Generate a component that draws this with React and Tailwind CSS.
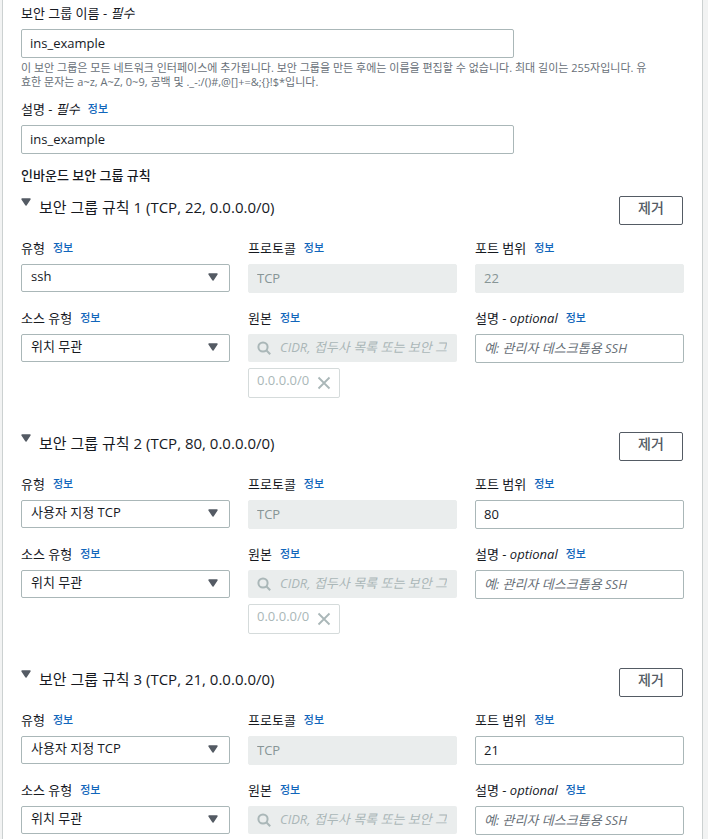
import React, { useId, useState } from 'react';

const TYPE_OPTIONS = ['ssh', '사용자 지정 TCP', 'HTTP', 'HTTPS'];
const SOURCE_OPTIONS = ['위치 무관', '내 IP', '사용자 지정'];

const NAME_HINT =
  '이 보안 그룹은 모든 네트워크 인터페이스에 추가됩니다. 보안 그룹을 만든 후에는 이름을 편집할 수 없습니다. 최대 길이는 255자입니다. 유효한 문자는 a~z, A~Z, 0~9, 공백 및 ._-:/()#,@[]+=&;{}!$*입니다.';

const INITIAL_RULES = [
  { id: 1, type: 'ssh', port: '22', portLocked: true, source: '위치 무관' },
  { id: 2, type: '사용자 지정 TCP', port: '80', portLocked: false, source: '위치 무관' },
  { id: 3, type: '사용자 지정 TCP', port: '21', portLocked: false, source: '위치 무관' },
];

const inputClass =
  'block w-full h-[29px] rounded-xs border border-[#aab7b8] bg-white px-2 pb-[2px] text-[13px] text-[#16191f] outline-none placeholder:italic placeholder:text-[#687078] focus:border-[#00a1c9] disabled:border-[#eaeded] disabled:bg-[#eaeded] disabled:text-[#879596] disabled:placeholder:text-[#aab7b8]';

function CaretIcon({ className }) {
  return (
    <svg className={className} width="10" height="8" viewBox="0 0 10 8" aria-hidden="true">
      <path d="M1 1h8L5 7z" fill="#545b64" stroke="#545b64" strokeWidth="1.4" strokeLinejoin="round" />
    </svg>
  );
}

function SearchIcon({ className }) {
  return (
    <svg className={className} width="14" height="14" viewBox="0 0 14 14" fill="none" stroke="#aab7b8" strokeWidth="2" aria-hidden="true">
      <circle cx="6" cy="6" r="4.6" />
      <path d="M9.3 9.3L13.2 13.2" />
    </svg>
  );
}

function CloseIcon() {
  return (
    <svg width="14" height="14" viewBox="0 0 14 14" fill="none" stroke="#aab7b8" strokeWidth="1.8" aria-hidden="true">
      <path d="M1.5 1.5l11 11M12.5 1.5l-11 11" />
    </svg>
  );
}

function Field({ id, label, suffix, info = true, children }) {
  return (
    <div className="min-w-0">
      <div className="mb-[7px] flex h-[18px] items-center gap-2 leading-[18px]">
        <label htmlFor={id} className="whitespace-nowrap">
          {label}
          {suffix && <> - <i>{suffix}</i></>}
        </label>
        {info && (
          <a href="#info" className="text-[11px] font-medium whitespace-nowrap text-[#1166bb] hover:underline">
            정보
          </a>
        )}
      </div>
      {children}
    </div>
  );
}

function Select({ id, value, options, onChange }) {
  return (
    <div className="relative">
      <select
        id={id}
        value={value}
        onChange={(e) => onChange(e.target.value)}
        className="block h-7 w-full appearance-none rounded-xs border border-[#aab7b8] bg-white pr-8 pb-[2px] pl-[9px] text-[13px] text-[#16191f] outline-none focus:border-[#00a1c9]"
      >
        {options.map((option) => (
          <option key={option}>{option}</option>
        ))}
      </select>
      <CaretIcon className="pointer-events-none absolute top-[9px] right-3" />
    </div>
  );
}

function Rule({ rule, number, onChange, onRemove }) {
  const id = useId();
  const [open, setOpen] = useState(true);

  return (
    <section>
      <div className="flex items-start justify-between pr-px">
        <button
          type="button"
          onClick={() => setOpen(!open)}
          aria-expanded={open}
          className="flex items-start gap-2 text-left text-[15px] leading-[22px]"
        >
          <CaretIcon className="mt-[2px]" />
          <span>
            보안 그룹 규칙 {number} (TCP, {rule.port}, 0.0.0.0/0)
          </span>
        </button>
        <button
          type="button"
          onClick={onRemove}
          className="h-[29px] w-16 rounded-xs border border-[#545b64] pb-[6px] text-sm font-medium text-[#545b64] hover:bg-[#fafafa]"
        >
          제거
        </button>
      </div>

      {open && (
        <div className="mt-[14px] grid grid-cols-3 gap-x-[18px] gap-y-4">
          <Field id={`${id}-type`} label="유형">
            <Select
              id={`${id}-type`}
              value={rule.type}
              options={TYPE_OPTIONS}
              onChange={(type) => onChange({ type })}
            />
          </Field>
          <Field id={`${id}-protocol`} label="프로토콜">
            <input id={`${id}-protocol`} className={inputClass} value="TCP" disabled readOnly />
          </Field>
          <Field id={`${id}-port`} label="포트 범위">
            <input
              id={`${id}-port`}
              className={inputClass}
              value={rule.port}
              disabled={rule.portLocked}
              onChange={(e) => onChange({ port: e.target.value })}
            />
          </Field>

          <Field id={`${id}-source`} label="소스 유형">
            <Select
              id={`${id}-source`}
              value={rule.source}
              options={SOURCE_OPTIONS}
              onChange={(source) => onChange({ source })}
            />
          </Field>
          <Field id={`${id}-cidr`} label="원본">
            <div className="relative">
              <input
                id={`${id}-cidr`}
                placeholder="CIDR, 접두사 목록 또는 보안 그룹 추가"
                disabled
                className="block h-7 w-full rounded-xs bg-[#eaeded] pr-[10px] pb-[2px] pl-8 text-[13px] placeholder:text-[#aab7b8] placeholder:italic"
              />
              <SearchIcon className="pointer-events-none absolute top-[7px] left-[9px]" />
            </div>
            <div className="mt-[6px] inline-flex h-[30px] items-center gap-2 rounded-xs border border-[#d5dbdb] px-2 text-[13px] text-[#aab7b8]">
              <span className="pb-1">0.0.0.0/0</span>
              <button type="button" aria-label="0.0.0.0/0 제거" disabled>
                <CloseIcon />
              </button>
            </div>
          </Field>
          <Field id={`${id}-desc`} label="설명" suffix="optional">
            <input id={`${id}-desc`} className={inputClass} placeholder="예: 관리자 데스크톱용 SSH" />
          </Field>
        </div>
      )}
    </section>
  );
}

export default function App() {
  const [name, setName] = useState('ins_example');
  const [description, setDescription] = useState('ins_example');
  const [rules, setRules] = useState(INITIAL_RULES);

  const updateRule = (id, patch) => {
    setRules(rules.map((rule) => (rule.id === id ? { ...rule, ...patch } : rule)));
  };

  return (
    <div className="h-screen overflow-y-auto bg-[#f2f3f3] pr-[5px] pl-[2px] font-['Open_Sans','Noto_Sans_CJK_KR',sans-serif] text-[13px] text-[#16191f] [scrollbar-width:none]">
      <main className="min-h-full border-x border-[#ccd1d1] bg-white px-[18px] pt-1 pb-6">
        <div className="grid grid-cols-12 gap-x-[18px]">
          <div className="col-span-9">
            <Field
              id="group-name"
              label={<>보안 그룹 이름 - <i>필수</i></>}
              info={false}
            >
              <input id="group-name" className={inputClass} value={name} onChange={(e) => setName(e.target.value)} />
            </Field>
          </div>
          <p className="col-span-12 mt-[3px] pr-8 text-[11px] leading-[14px] text-[#687078]">{NAME_HINT}</p>
          <div className="col-span-9 mt-[11px]">
            <Field id="group-desc" label={<>설명 - <i>필수</i></>}>
              <input id="group-desc" className={inputClass} value={description} onChange={(e) => setDescription(e.target.value)} />
            </Field>
          </div>
        </div>

        <h2 className="mt-3 mb-3 leading-[18px] font-medium">인바운드 보안 그룹 규칙</h2>

        <div className="flex flex-col gap-[34px]">
          {rules.map((rule, index) => (
            <Rule
              key={rule.id}
              rule={rule}
              number={index + 1}
              onChange={(patch) => updateRule(rule.id, patch)}
              onRemove={() => setRules(rules.filter((r) => r.id !== rule.id))}
            />
          ))}
        </div>
      </main>
    </div>
  );
}
